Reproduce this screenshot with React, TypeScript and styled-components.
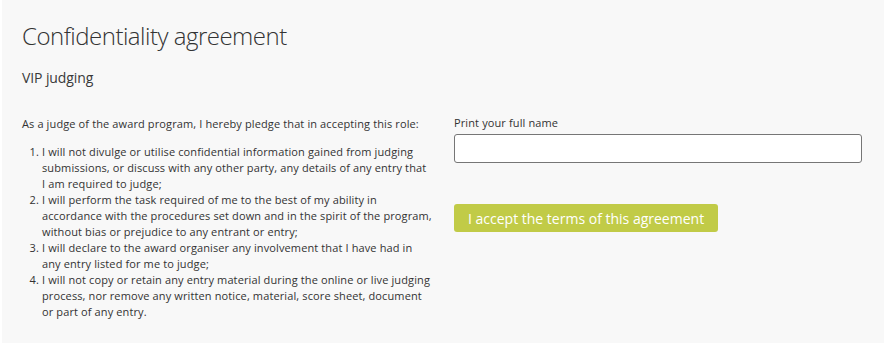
import React from 'react'
import styled, { createGlobalStyle } from 'styled-components'

const GlobalStyle = createGlobalStyle`
  html, body {
    margin: 0;
    padding: 0;
    background: #ffffff;
  }
  body {
    font-family: 'Open Sans', 'Noto Sans', sans-serif;
    color: #333333;
  }
`

const Panel = styled.section`
  margin-left: 2px;
  width: 882px;
  height: 343px;
  box-sizing: border-box;
  background-color: #f8f8f8;
  padding: 18px 20px 0 20px;
`

const Title = styled.h1`
  margin: 0;
  font-size: 24px;
  font-weight: 300;
  letter-spacing: -0.5px;
  line-height: 36px;
  color: #333333;
`

const Subtitle = styled.h2`
  margin: 14px 0 0 0;
  font-size: 14px;
  font-weight: 400;
  letter-spacing: -0.1px;
  line-height: 20px;
  color: #3a3a3a;
`

const Columns = styled.div`
  display: grid;
  grid-template-columns: 410px 410px;
  gap: 22px;
  margin-top: 28px;
`

const TermsColumn = styled.div`
  font-size: 11px;
  letter-spacing: 0.12px;
  line-height: 16px;
  color: #333333;

  p {
    margin: 0;
  }
`

const TermsList = styled.ol`
  margin: 12px 0 0 0;
  padding-left: 20px;
`

const FormColumn = styled.div`
  display: flex;
  flex-direction: column;
`

const Label = styled.label`
  font-size: 11px;
  letter-spacing: 0.12px;
  line-height: 16px;
  color: #333333;
  margin-top: -1px;
`

const NameInput = styled.input`
  margin-top: 3px;
  width: 408px;
  height: 29px;
  box-sizing: border-box;
  border: 1px solid #767676;
  border-radius: 3px;
  background: #ffffff;
  outline: none;
`

const AcceptButton = styled.button`
  align-self: flex-start;
  margin-top: 41px;
  height: 28px;
  padding: 0 14px;
  border: none;
  border-radius: 3px;
  background-color: #c1cb47;
  color: #ffffff;
  font-family: 'Open Sans', 'Noto Sans', sans-serif;
  font-size: 14px;
  cursor: pointer;
`

const terms = [
  'I will not divulge or utilise confidential information gained from judging submissions, or discuss with any other party, any details of any entry that I am required to judge;',
  'I will perform the task required of me to the best of my ability in accordance with the procedures set down and in the spirit of the program, without bias or prejudice to any entrant or entry;',
  'I will declare to the award organiser any involvement that I have had in any entry listed for me to judge;',
  'I will not copy or retain any entry material during the online or live judging process, nor remove any written notice, material, score sheet, document or part of any entry.',
]

const App: React.FC = () => {
  return (
    <>
      <GlobalStyle />
      <Panel>
        <Title>Confidentiality agreement</Title>
        <Subtitle>VIP judging</Subtitle>
        <Columns>
          <TermsColumn>
            <p>As a judge of the award program, I hereby pledge that in accepting this role:</p>
            <TermsList>
              {terms.map((term, index) => (
                <li key={index}>{term}</li>
              ))}
            </TermsList>
          </TermsColumn>
          <FormColumn>
            <Label htmlFor="full-name">Print your full name</Label>
            <NameInput id="full-name" type="text" />
            <AcceptButton type="button">I accept the terms of this agreement</AcceptButton>
          </FormColumn>
        </Columns>
      </Panel>
    </>
  )
}

export default App
